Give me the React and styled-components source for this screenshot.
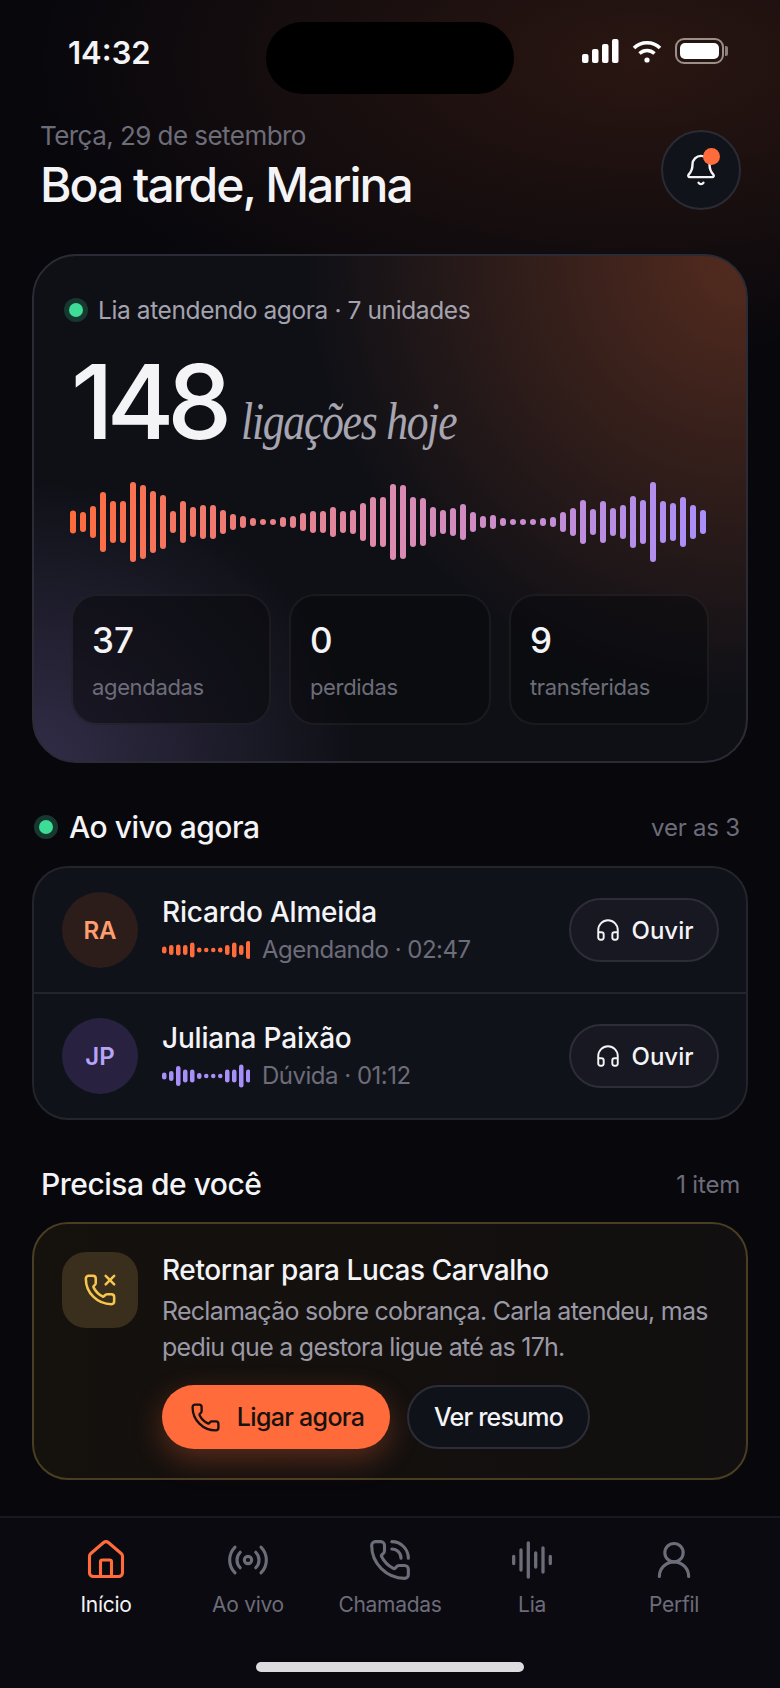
import React from 'react';
import styled, { createGlobalStyle } from 'styled-components';
import { Bell, Headphones, House, Phone, PhoneCall, PhoneMissed, Radio, UserRound } from 'lucide-react';

const HERO_BARS = [
    23, 20, 32, 60, 42, 42, 80, 74, 62, 54, 22, 42, 30, 34, 34, 24, 16, 12, 8, 6, 6, 10, 12, 18, 22, 22, 30, 22, 24, 38, 50, 50,
    76, 74, 50, 48, 30, 24, 28, 36, 20, 12, 14, 8, 6, 6, 6, 8, 10, 20, 28, 44, 26, 42, 28, 34, 52, 44, 80, 42, 38, 50, 34, 24,
];
const RICARDO_BARS = [7, 10, 11, 10, 15, 5, 4.5, 4.5, 5, 10, 15, 10, 18];
const JULIANA_BARS = [7, 10, 20, 13, 13, 6, 4.5, 4.5, 4.5, 13, 13, 23, 13];

const GlobalStyle = createGlobalStyle`
    html, body {
        margin: 0;
        padding: 0;
        background: #07070c;
    }
    * {
        box-sizing: border-box;
    }
`;

export default function App() {
    return <Page>
        <GlobalStyle />
        <StatusBar>
            <Clock>14:32</Clock>
            <Island />
            <StatusIcons>
                <svg width="37" height="25" viewBox="0 0 37 25" fill="#fff">
                    <rect x="0" y="15" width="6.5" height="9" rx="2" />
                    <rect x="10" y="10" width="6.5" height="14" rx="2" />
                    <rect x="20" y="5" width="6.5" height="19" rx="2" />
                    <rect x="30" y="0" width="6.5" height="24" rx="2" />
                </svg>
                <svg width="30" height="25" viewBox="0 0 30 25" fill="none" stroke="#fff" strokeWidth="3.6" strokeLinecap="butt">
                    <path d="M2 9 C 9 2, 21 2, 28 9" />
                    <path d="M7.5 14.5 C 12 10.5, 18 10.5, 22.5 14.5" />
                    <circle cx="15" cy="21" r="2.6" fill="#fff" stroke="none" />
                </svg>
                <Battery><BatteryFill /></Battery>
            </StatusIcons>
        </StatusBar>

        <Main>
            <Header>
                <div>
                    <DateLine>Terça, 29 de setembro</DateLine>
                    <Greeting>Boa tarde, Marina</Greeting>
                </div>
                <BellButton>
                    <Bell size={34} strokeWidth={1.7} color="#f4f4f6" />
                    <BellDot />
                </BellButton>
            </Header>

            <Hero>
                <HeroStatus><LiveDot />Lia atendendo agora · 7 unidades</HeroStatus>
                <HeroCount>
                    <Count>148</Count>
                    <CountLabel>ligações hoje</CountLabel>
                </HeroCount>
                <HeroWave />
                <Stats>
                    <Stat><StatValue>37</StatValue><StatLabel>agendadas</StatLabel></Stat>
                    <Stat><StatValue>0</StatValue><StatLabel>perdidas</StatLabel></Stat>
                    <Stat><StatValue>9</StatValue><StatLabel>transferidas</StatLabel></Stat>
                </Stats>
            </Hero>

            <SectionHead $top={46} $inset={2}>
                <SectionTitle><LiveDot />Ao vivo agora</SectionTitle>
                <SectionMeta>ver as 3</SectionMeta>
            </SectionHead>
            <LiveList>
                <LiveRow name="Ricardo Almeida" initials="RA" status="Agendando · 02:47" bars={RICARDO_BARS} color="#ff6b3a" tone="warm" />
                <LiveRow name="Juliana Paixão" initials="JP" status="Dúvida · 01:12" bars={JULIANA_BARS} color="#a78ffa" tone="cool" />
            </LiveList>

            <SectionHead $top={46} $inset={9}>
                <SectionTitle>Precisa de você</SectionTitle>
                <SectionMeta>1 item</SectionMeta>
            </SectionHead>
            <Alert>
                <AlertIcon><PhoneMissed size={34} strokeWidth={1.8} color="#f6c64f" /></AlertIcon>
                <AlertBody>
                    <AlertTitle>Retornar para Lucas Carvalho</AlertTitle>
                    <AlertText>Reclamação sobre cobrança. Carla atendeu, mas pediu que a gestora ligue até as 17h.</AlertText>
                    <AlertActions>
                        <CallButton><Phone size={31} strokeWidth={1.8} />Ligar agora</CallButton>
                        <SummaryButton>Ver resumo</SummaryButton>
                    </AlertActions>
                </AlertBody>
            </Alert>
        </Main>

        <TabBar>
            <Tab $active><House size={44} strokeWidth={1.7} /><TabLabel $active>Início</TabLabel></Tab>
            <Tab><Radio size={44} strokeWidth={1.7} /><TabLabel>Ao vivo</TabLabel></Tab>
            <Tab><PhoneCall size={44} strokeWidth={1.7} /><TabLabel>Chamadas</TabLabel></Tab>
            <Tab>
                <svg width="44" height="44" viewBox="0 0 44 44" fill="none" stroke="currentColor" strokeWidth="3.3" strokeLinecap="round">
                    <path d="M3.7 18.5v7M11 12v20M18.3 5v34M25.7 15v14M33 10v24M40.3 18.5v7" />
                </svg>
                <TabLabel>Lia</TabLabel>
            </Tab>
            <Tab><UserRound size={44} strokeWidth={1.7} /><TabLabel>Perfil</TabLabel></Tab>
        </TabBar>
        <HomeIndicator />
    </Page>
}

function HeroWave() {
    return <WaveSvg width="644" height="84" viewBox="0 0 644 84">
        <defs>
            <linearGradient id="heroWave" gradientUnits="userSpaceOnUse" x1="0" y1="0" x2="644" y2="0">
                <stop offset="0" stopColor="#ff6b3a" />
                <stop offset="0.5" stopColor="#dd8bb0" />
                <stop offset="1" stopColor="#a98ffb" />
            </linearGradient>
        </defs>
        {HERO_BARS.map((h, i) => (
            <rect key={i} x={3 + i * 10} y={42 - h / 2} width="6" height={h} rx="3" fill="url(#heroWave)" />
        ))}
    </WaveSvg>
}

function MiniWave({ bars, color }) {
    return <svg width="88" height="24" viewBox="0 0 88 24">
        {bars.map((h, i) => (
            <rect key={i} x={i * 7} y={12 - h / 2} width="4.5" height={h} rx="2.25" fill={color} />
        ))}
    </svg>
}

function LiveRow({ name, initials, status, bars, color, tone }) {
    return <Row>
        <Avatar $tone={tone}>{initials}</Avatar>
        <RowInfo>
            <RowName>{name}</RowName>
            <RowStatus><MiniWave bars={bars} color={color} />{status}</RowStatus>
        </RowInfo>
        <ListenButton><Headphones size={26} strokeWidth={1.8} />Ouvir</ListenButton>
    </Row>
}

const Page = styled.div`
    width: 780px;
    height: 1688px;
    display: flex;
    flex-direction: column;
    overflow: hidden;
    color: #f4f4f6;
    font-family: Inter, "Liberation Sans", sans-serif;
    background:
        radial-gradient(620px 300px at 640px 60px, rgba(70, 34, 22, 0.55), rgba(70, 34, 22, 0) 100%),
        #07070c;
`;

const StatusBar = styled.div`
    display: flex;
    justify-content: space-between;
    align-items: flex-start;
    height: 94px;
    padding: 22px 56px 0 68px;
`;

const Clock = styled.div`
    width: 130px;
    margin-top: 12px;
    font-size: 31px;
    line-height: 38px;
    font-weight: 600;
`;

const Island = styled.div`
    width: 248px;
    height: 72px;
    border-radius: 36px;
    background: #000;
`;

const StatusIcons = styled.div`
    display: flex;
    align-items: center;
    gap: 13px;
    margin-top: 16px;
`;

const Battery = styled.div`
    position: relative;
    width: 49px;
    height: 26px;
    padding: 3px;
    border: 2px solid #9a8f8a;
    border-radius: 9px;

    &::after {
        content: '';
        position: absolute;
        top: 6px;
        right: -6px;
        width: 3px;
        height: 10px;
        border-radius: 0 2px 2px 0;
        background: #8a807b;
    }
`;

const BatteryFill = styled.div`
    height: 100%;
    border-radius: 5px;
    background: #fff;
`;

const Main = styled.main`
    flex: 1;
    padding: 0 32px;
`;

const Header = styled.header`
    display: flex;
    justify-content: space-between;
    align-items: flex-start;
    height: 119px;
    padding: 27px 7px 0 8px;
`;

const DateLine = styled.div`
    font-size: 26px;
    line-height: 30px;
    letter-spacing: -0.55px;
    color: #6d6c79;
`;

const Greeting = styled.h1`
    margin: 6px 0 0;
    font-size: 48px;
    line-height: 56px;
    font-weight: 500;
    letter-spacing: -2px;
`;

const BellButton = styled.div`
    position: relative;
    display: flex;
    align-items: center;
    justify-content: center;
    width: 80px;
    height: 80px;
    margin-top: 9px;
    border-radius: 50%;
    background: #11131a;
    border: 2px solid #2a2b33;
`;

const BellDot = styled.span`
    position: absolute;
    top: 16px;
    right: 19px;
    width: 17px;
    height: 17px;
    border-radius: 50%;
    background: #ff6b3a;
`;

const Hero = styled.section`
    height: 509px;
    margin-top: 41px;
    padding: 39px 0 0 37px;
    border-radius: 44px;
    border: 2px solid #2b2b35;
    background:
        radial-gradient(440px 440px at 100% 0%, rgba(96, 48, 32, 0.85), rgba(96, 48, 32, 0) 100%),
        radial-gradient(320px 280px at 0% 100%, rgba(58, 52, 84, 0.8), rgba(58, 52, 84, 0) 100%),
        #0f1016;
`;

const HeroStatus = styled.div`
    display: flex;
    align-items: center;
    gap: 10px;
    height: 30px;
    margin-left: -7px;
    font-size: 24.5px;
    letter-spacing: -0.4px;
    color: #a4a3ae;
`;

const LiveDot = styled.span`
    flex: none;
    width: 24px;
    height: 24px;
    border-radius: 50%;
    border: 5px solid #17382f;
    background: #3ddc97;
`;

const HeroCount = styled.div`
    display: flex;
    align-items: baseline;
    gap: 16px;
    margin-top: 27px;
`;

const Count = styled.div`
    font-size: 103px;
    line-height: 100px;
    font-weight: 500;
    letter-spacing: -7px;
`;

const CountLabel = styled.div`
    font-family: "Liberation Serif", serif;
    font-style: italic;
    font-size: 52px;
    color: #a6a5b0;
    letter-spacing: -1.5px;
    white-space: nowrap;
    transform: scaleX(0.84);
    transform-origin: left center;
`;

const WaveSvg = styled.svg`
    display: block;
    margin: 28px 0 0 -4px;
`;

const Stats = styled.div`
    display: grid;
    grid-template-columns: 200px 202px 200px;
    gap: 18px;
    margin-top: 30px;
`;

const Stat = styled.div`
    height: 131px;
    padding: 24px 19px;
    border-radius: 26px;
    border: 2px solid rgba(255, 255, 255, 0.06);
    background: rgba(9, 9, 13, 0.55);
`;

const StatValue = styled.div`
    font-size: 35px;
    line-height: 40px;
    font-weight: 500;
`;

const StatLabel = styled.div`
    margin-top: 14px;
    font-size: 22px;
    line-height: 26px;
    letter-spacing: -0.35px;
    color: #6d6c79;
`;

const SectionHead = styled.div`
    display: flex;
    justify-content: space-between;
    align-items: center;
    height: 36px;
    margin-top: ${p => p.$top}px;
    padding: 0 8px 0 ${p => p.$inset}px;
`;

const SectionTitle = styled.h2`
    display: flex;
    align-items: center;
    gap: 11px;
    margin: 0;
    font-size: 30px;
    line-height: 36px;
    font-weight: 500;
    letter-spacing: -0.5px;
`;

const SectionMeta = styled.div`
    font-size: 24px;
    letter-spacing: -0.2px;
    color: #6d6c79;
`;

const LiveList = styled.div`
    margin-top: 21px;
    border-radius: 36px;
    border: 2px solid #23242c;
    background: #10121a;
`;

const Row = styled.div`
    display: flex;
    align-items: center;
    height: 124px;
    padding: 0 27px 0 28px;

    & + & {
        height: 126px;
        border-top: 2px solid #23242c;
    }
`;

const Avatar = styled.div`
    flex: none;
    display: flex;
    align-items: center;
    justify-content: center;
    width: 76px;
    height: 76px;
    border-radius: 50%;
    font-size: 24px;
    font-weight: 600;
    background: ${p => (p.$tone === 'warm' ? '#2c1d1a' : '#282240')};
    color: ${p => (p.$tone === 'warm' ? '#ff9d6e' : '#b7a4f7')};
`;

const RowInfo = styled.div`
    flex: 1;
    min-width: 0;
    margin-left: 24px;
`;

const RowName = styled.div`
    font-size: 28px;
    line-height: 36px;
    font-weight: 500;
    letter-spacing: -0.2px;
`;

const RowStatus = styled.div`
    display: flex;
    align-items: center;
    gap: 12px;
    margin-top: 4px;
    font-size: 24px;
    line-height: 32px;
    letter-spacing: -0.5px;
    color: #6d6c79;
`;

const ListenButton = styled.button`
    display: flex;
    align-items: center;
    justify-content: center;
    gap: 11px;
    width: 150px;
    height: 64px;
    padding: 0;
    border-radius: 32px;
    border: 2px solid #2c2d36;
    background: #171821;
    color: #f4f4f6;
    font-family: inherit;
    font-size: 24px;
    font-weight: 500;
`;

const Alert = styled.section`
    display: flex;
    gap: 24px;
    height: 258px;
    margin-top: 20px;
    padding: 28px 10px 0 28px;
    border-radius: 36px;
    border: 2px solid #4a3e22;
    background: linear-gradient(90deg, #15110d, #110f0f);
`;

const AlertIcon = styled.div`
    flex: none;
    display: flex;
    align-items: center;
    justify-content: center;
    width: 76px;
    height: 76px;
    border-radius: 24px;
    background: #3a2f1c;
`;

const AlertBody = styled.div`
    flex: 1;
    min-width: 0;
`;

const AlertTitle = styled.div`
    font-size: 28px;
    line-height: 36px;
    font-weight: 500;
    letter-spacing: -0.4px;
`;

const AlertText = styled.p`
    margin: 5px 0 0;
    font-size: 25px;
    line-height: 36px;
    letter-spacing: -0.75px;
    color: #9a99a5;
`;

const AlertActions = styled.div`
    display: flex;
    gap: 17px;
    margin-top: 20px;
`;

const CallButton = styled.button`
    display: flex;
    align-items: center;
    justify-content: center;
    gap: 16px;
    width: 228px;
    height: 64px;
    padding: 0 0 0 2px;
    border: none;
    border-radius: 32px;
    background: #ff6b3a;
    color: #17120f;
    font-family: inherit;
    font-size: 25px;
    font-weight: 500;
    letter-spacing: -0.7px;
    box-shadow: 0 10px 30px rgba(255, 107, 58, 0.3);
`;

const SummaryButton = styled.button`
    width: 183px;
    height: 64px;
    padding: 0;
    border-radius: 32px;
    border: 2px solid #2c2d36;
    background: #10121a;
    color: #f4f4f6;
    font-family: inherit;
    font-size: 25px;
    font-weight: 500;
    letter-spacing: -0.8px;
`;

const TabBar = styled.nav`
    display: grid;
    grid-template-columns: repeat(5, 142px);
    height: 128px;
    padding: 20px 0 0 35px;
    border-top: 2px solid #191a21;
    background: #0a0a10;
`;

const Tab = styled.div`
    display: flex;
    flex-direction: column;
    align-items: center;
    color: ${p => (p.$active ? '#ff6b3a' : '#6d6c79')};
`;

const TabLabel = styled.span`
    margin-top: 10px;
    font-size: 21px;
    line-height: 26px;
    letter-spacing: -0.3px;
    color: ${p => (p.$active ? '#f4f4f6' : '#6d6c79')};
`;

const HomeIndicator = styled.div`
    flex: none;
    position: relative;
    height: 44px;
    background: #0a0a10;

    &::after {
        content: '';
        position: absolute;
        top: 18px;
        left: 256px;
        width: 268px;
        height: 10px;
        border-radius: 5px;
        background: #dcdcde;
    }
`;
